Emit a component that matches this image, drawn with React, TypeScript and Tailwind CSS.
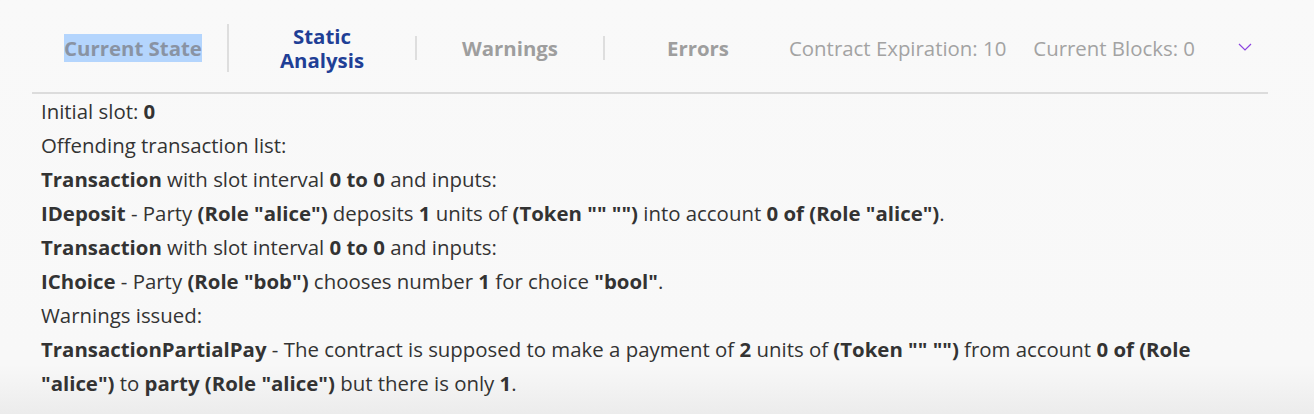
import React from "react";

const tabs = [
  { label: "Current State", state: "selected-text" },
  { label: "Static Analysis", state: "active" },
  { label: "Warnings", state: "idle" },
  { label: "Errors", state: "idle" },
];

const B: React.FC<{ children: React.ReactNode }> = ({ children }) => (
  <span className="font-bold">{children}</span>
);

const App: React.FC = () => {
  return (
    <div
      className="w-[1314px] h-[414px] overflow-hidden bg-gradient-to-b from-[#f9f9f9] via-[#f8f8f8] via-[88%] to-[#ececec] text-[#333333]"
      style={{ fontFamily: '"Open Sans", sans-serif' }}
    >
      <div className="mx-[32px] w-[1236px] h-[94px] pt-[4px] flex items-center border-b-2 border-[#dcdcdc]">
        <div className="flex items-center pl-[7px]">
          {tabs.map((tab, i) => (
            <div
              key={tab.label}
              className={
                "w-[188px] flex justify-center text-center text-[20.4px] leading-[24px] font-bold " +
                (i > 0 ? "border-l-2 border-[#dedede] " : "") +
                (tab.state === "active" ? "text-[#1f3f96]" : "text-[#9e9e9e]")
              }
            >
              {tab.state === "selected-text" ? (
                <span className="bg-[#b4d5fd] text-[#8993a3] py-[2px]">{tab.label}</span>
              ) : tab.state === "active" ? (
                <span>
                  Static
                  <br />
                  Analysis
                </span>
              ) : (
                <span>{tab.label}</span>
              )}
            </div>
          ))}
        </div>
        <div className="flex items-center text-[20.4px] leading-[24px] text-[#a3a3a3] ml-[-2px]">
          <span>Contract Expiration: 10</span>
          <span className="ml-[27px]">Current Blocks: 0</span>
          <svg
            className="ml-[43px] mt-[-2px]"
            width="14"
            height="8"
            viewBox="0 0 14 8"
            fill="none"
          >
            <path d="M1 1l6 6 6-6" stroke="#8c45e0" strokeWidth="1.2" />
          </svg>
        </div>
      </div>
      <div className="pl-[41px] pr-[60px] text-[20.4px] leading-[34px]">
        <div>
          Initial slot: <B>0</B>
        </div>
        <div>Offending transaction list:</div>
        <div>
          <B>Transaction</B> with slot interval <B>0 to 0</B> and inputs:
        </div>
        <div>
          <B>IDeposit</B> - Party <B>(Role "alice")</B> deposits <B>1</B> units of{" "}
          <B>(Token "" "")</B> into account <B>0 of (Role "alice")</B>.
        </div>
        <div>
          <B>Transaction</B> with slot interval <B>0 to 0</B> and inputs:
        </div>
        <div>
          <B>IChoice</B> - Party <B>(Role "bob")</B> chooses number <B>1</B> for choice{" "}
          <B>"bool"</B>.
        </div>
        <div>Warnings issued:</div>
        <div className="w-[1210px]">
          <B>TransactionPartialPay</B> - The contract is supposed to make a payment of{" "}
          <B>2</B> units of <B>(Token "" "")</B> from account <B>0 of (Role "alice")</B> to{" "}
          <B>party (Role "alice")</B> but there is only <B>1</B>.
        </div>
      </div>
    </div>
  );
};

export default App;
